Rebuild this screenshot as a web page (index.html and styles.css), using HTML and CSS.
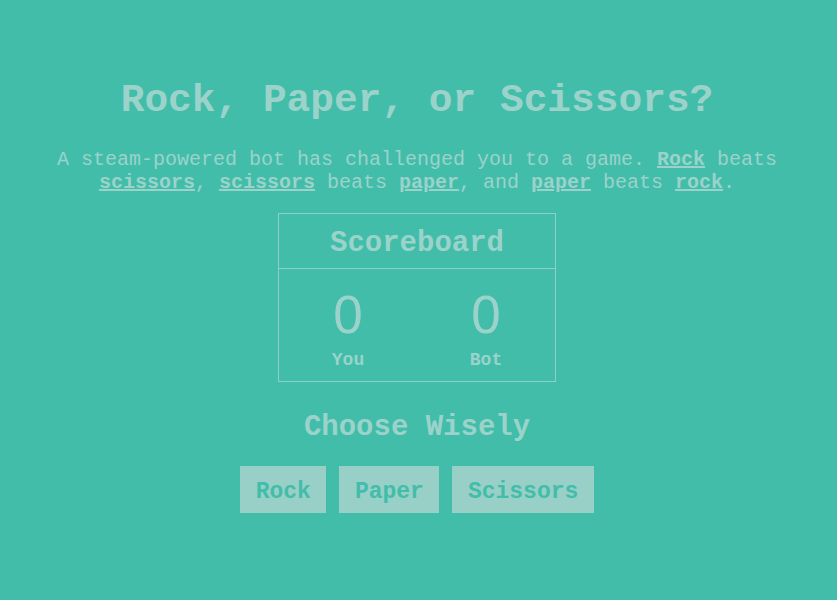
FILE: index.html
```html
<!DOCTYPE html>
<html lang="en">
<head>
<meta charset="utf-8">
<title>Rock, Paper, or Scissors?</title>
<link rel="stylesheet" href="styles.css">
</head>
<body>
<main class="page">
  <h1 class="title">Rock, Paper, or Scissors?</h1>
  <p class="intro">A steam-powered bot has challenged you to a game. <a href="#">Rock</a> beats <a href="#">scissors</a>, <a href="#">scissors</a> beats <a href="#">paper</a>, and <a href="#">paper</a> beats <a href="#">rock</a>.</p>
  <section class="scoreboard">
    <h2 class="scoreboard-title">Scoreboard</h2>
    <div class="scores">
      <div class="score">
        <span class="score-num">0</span>
        <span class="score-label">You</span>
      </div>
      <div class="score">
        <span class="score-num">0</span>
        <span class="score-label">Bot</span>
      </div>
    </div>
  </section>
  <h2 class="choose">Choose Wisely</h2>
  <div class="choices">
    <button class="choice">Rock</button>
    <button class="choice">Paper</button>
    <button class="choice">Scissors</button>
  </div>
</main>
</body>
</html>
```
FILE: styles.css
```css
html, body {
  margin: 0;
  padding: 0;
}
body {
  background: #42bdaa;
  color: #9bd3ca;
  font-family: "Courier New", "Liberation Mono", monospace;
  width: 837px;
  height: 600px;
  overflow: hidden;
}
.page {
  display: flex;
  flex-direction: column;
  align-items: center;
  padding: 78px 10px 0 7px;
  text-align: center;
}
.title {
  margin: 0;
  font-size: 39.5px;
  line-height: 46px;
  font-weight: bold;
}
.intro {
  margin: 24px 0 0;
  font-size: 20px;
  line-height: 23px;
}
.intro a {
  color: inherit;
  font-weight: bold;
  text-decoration: underline;
}
.scoreboard {
  margin-top: 19px;
  width: 278px;
  box-sizing: border-box;
  border: 1px solid #8fcfc5;
}
.scoreboard-title {
  margin: 0;
  font-size: 29px;
  line-height: 54px;
  padding-top: 3px;
  height: 55px;
  box-sizing: border-box;
  border-bottom: 1px solid #8fcfc5;
}
.scores {
  display: grid;
  grid-template-columns: 1fr 1fr;
  padding: 16px 0 10px;
}
.score {
  display: flex;
  flex-direction: column;
  align-items: center;
  gap: 4px;
}
.score-num {
  font-family: "Liberation Sans", Arial, sans-serif;
  font-size: 53px;
  line-height: 60px;
}
.score-label {
  font-size: 18px;
  line-height: 22px;
  font-weight: bold;
}
.choose {
  margin: 29px 0 0;
  font-size: 29px;
  line-height: 34px;
  font-weight: bold;
}
.choices {
  display: flex;
  gap: 13px;
  margin-top: 21px;
}
.choice {
  background: #98d0c8;
  color: #42bdaa;
  border: none;
  margin: 0;
  font-family: "Courier New", "Liberation Mono", monospace;
  font-weight: bold;
  font-size: 23px;
  line-height: 27px;
  padding: 13px 15.5px 7px;
  height: 47px;
}
```
